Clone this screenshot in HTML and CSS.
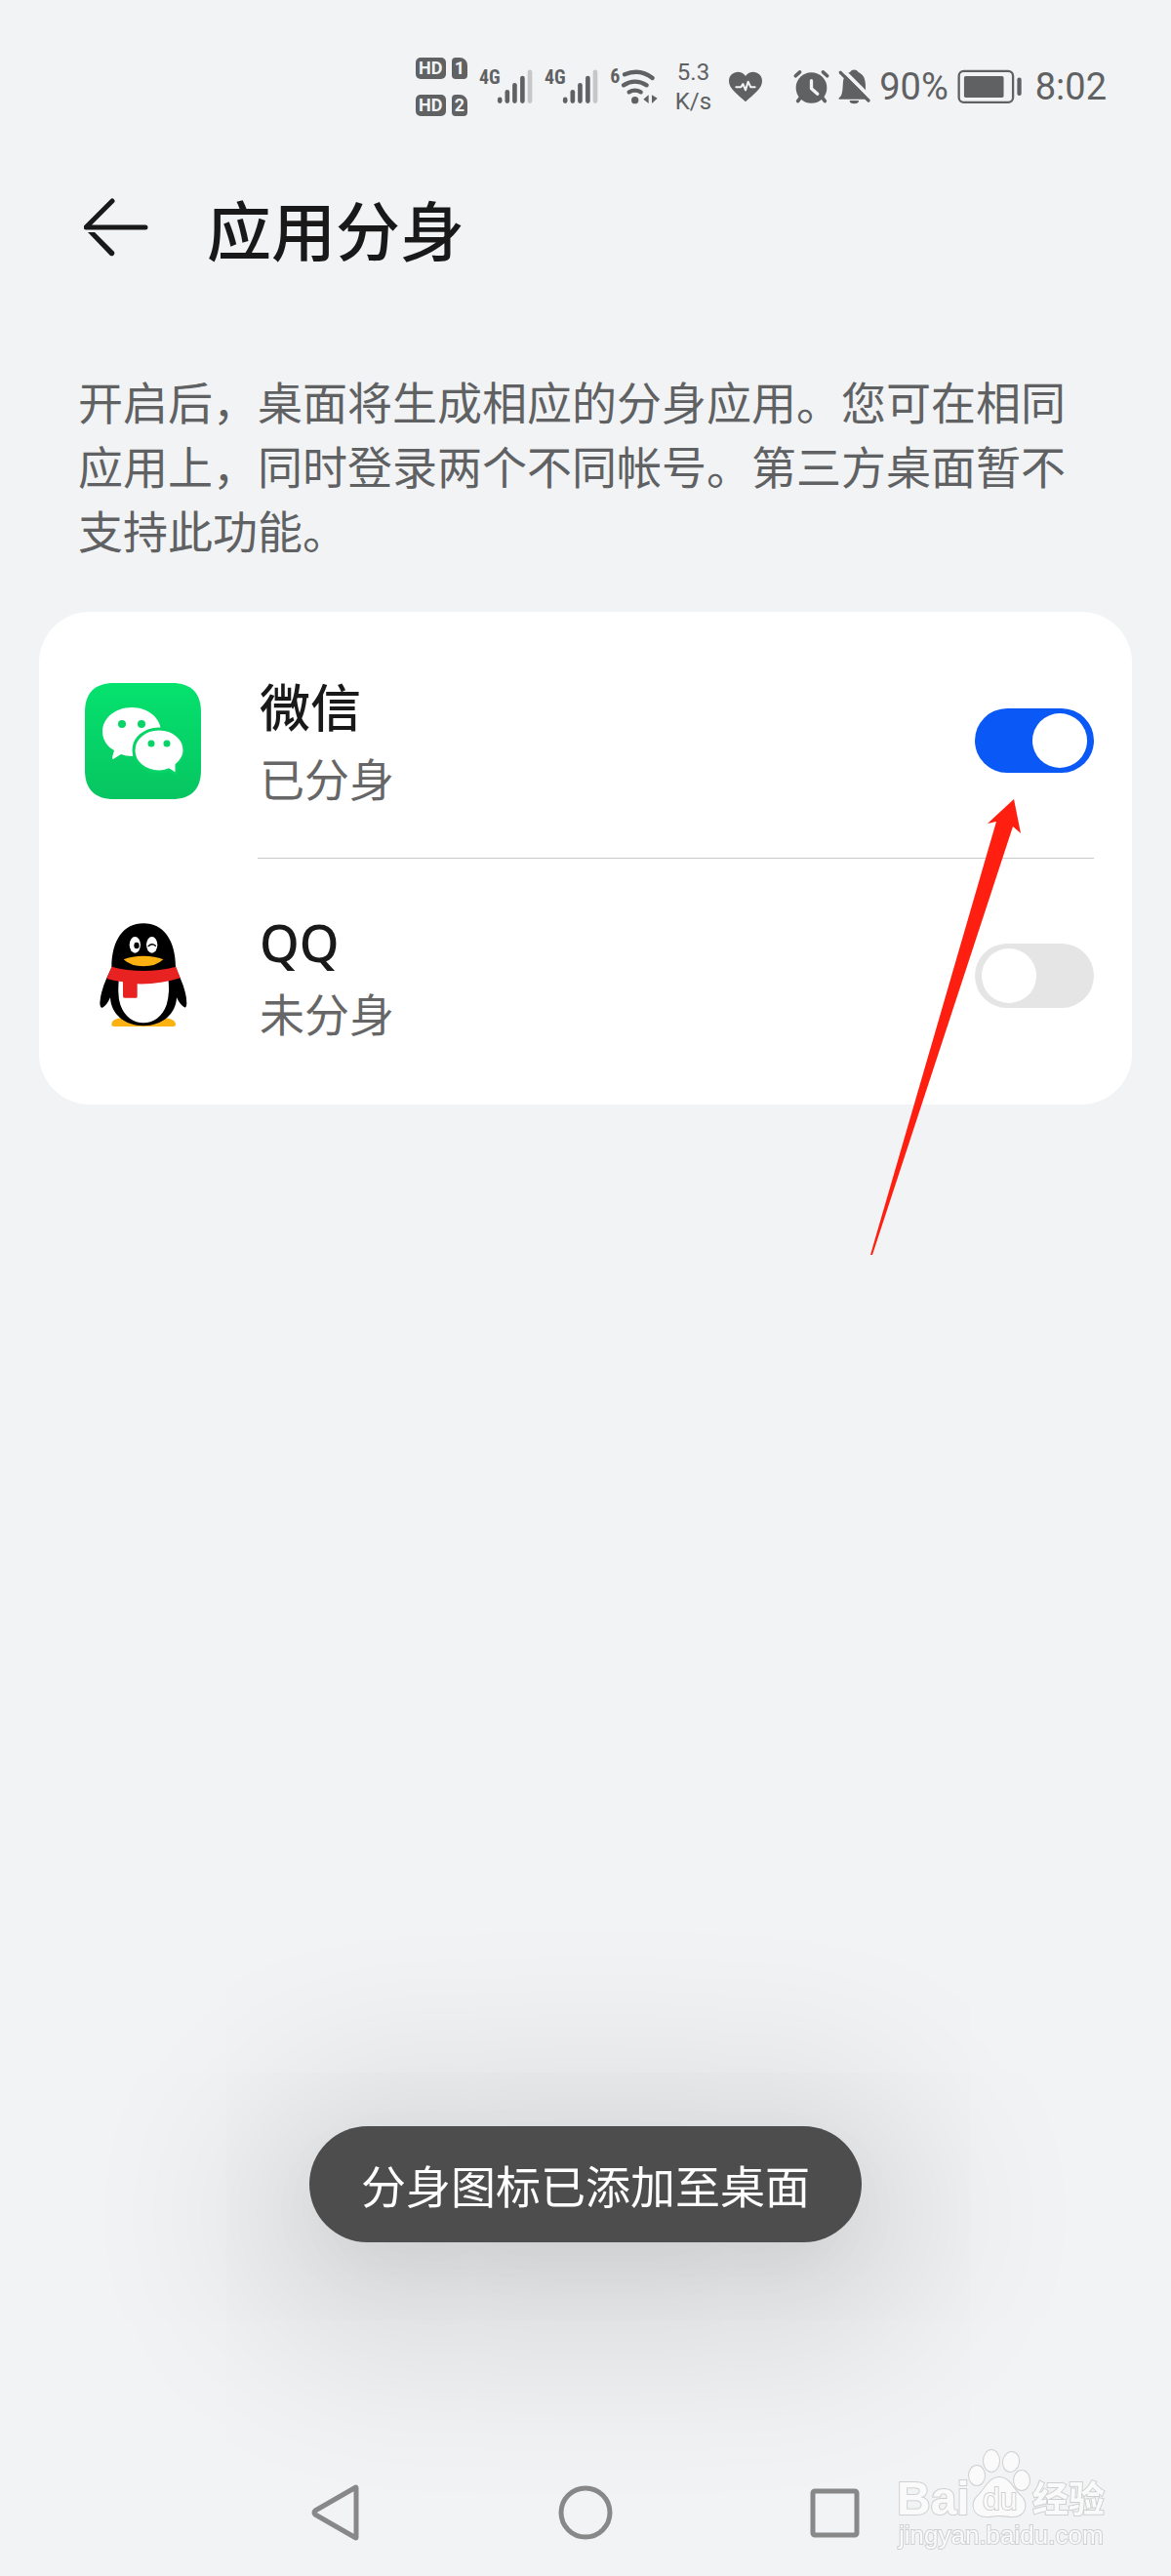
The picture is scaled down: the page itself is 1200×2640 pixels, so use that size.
FILE: index.html
```html
<!DOCTYPE html>
<html lang="zh-CN">
<head>
  <meta charset="UTF-8" />
  <meta name="viewport" content="width=device-width, initial-scale=1.0" />
  <title>应用分身</title>
  <link rel="stylesheet" href="styles.css">
</head>
<body>
  <div class="status-bar">
    <div class="network">
      <div class="hd-list">
        <span class="hd">HD</span><span class="sim">1</span>
        <span class="hd">HD</span><span class="sim">2</span>
      </div>
      <svg class="signal" viewBox="243 92 166 108">
        <text x="243" y="138">4G</text>
        <rect x="300" y="178" width="14" height="19" rx="7" />
        <rect x="323" y="155" width="14" height="42" rx="7" />
        <rect x="346" y="134" width="14" height="63" rx="7" />
        <rect x="370" y="112" width="14" height="85" rx="7" />
        <rect class="off" x="393" y="93" width="14" height="104" rx="7" />
      </svg>
      <svg class="signal" viewBox="243 92 166 108">
        <text x="243" y="138">4G</text>
        <rect x="300" y="178" width="14" height="19" rx="7" />
        <rect x="323" y="155" width="14" height="42" rx="7" />
        <rect x="346" y="134" width="14" height="63" rx="7" />
        <rect x="370" y="112" width="14" height="85" rx="7" />
        <rect class="off" x="393" y="93" width="14" height="104" rx="7" />
      </svg>
      <svg class="wifi" viewBox="638 92 150 108">
        <text x="639" y="135">6</text>
        <g fill="none" stroke="currentColor" stroke-width="13" stroke-linecap="round">
          <path d="M697 162Q715 152 733 162" />
          <path d="M680 141Q715 119 751 141" />
          <path d="M683 108Q730 88 769 119" />
        </g>
        <circle cx="715" cy="187" r="11" />
        <path d="M741 184l16-13v26zM767 171l17 10-17 16z" />
      </svg>
    </div>
    <div class="speed">5.3<br>K/s</div>
    <svg class="heart" viewBox="1010 98 108 98">
      <path d="M1064 193C1040 170 1013 153 1013 129C1013 102 1048 91 1064 114C1080 91 1115 102 1115 129C1115 153 1088 170 1064 193Z" />
      <path class="cut" stroke-width="6" d="M1035 148h15l6-10 8 19 8-26 8 17h13" />
    </svg>
    <div class="system">
      <svg class="alarm" viewBox="100 92 112 108">
        <circle cx="156" cy="149" r="48" />
        <path fill="none" stroke="currentColor" stroke-width="11" stroke-linecap="round" d="M107 112l13-12M192 100l13 12M122 180l-8 10M190 180l8 10" />
        <path class="cut" stroke-width="10" d="M156 127v24l19 17" />
      </svg>
      <svg class="bell" viewBox="245 92 99 108">
        <path d="M247 184v-4C260 172 258 150 260 130C262 114 270 105 281 101C287 91 301 91 307 101C322 108 330 120 329 150L331 184Z" />
        <path d="M280 188a14 10 0 0 0 28 0z" />
        <path class="cut" stroke-width="12" d="M259 94L350 185" />
        <path fill="none" stroke="currentColor" stroke-width="10" stroke-linecap="round" d="M252 102L338 188" />
      </svg>
      <span>90%</span>
      <svg class="battery" viewBox="603 92 203 108">
        <rect x="608" y="97" width="168" height="97" rx="15" fill="none" stroke="currentColor" stroke-width="7" />
        <rect x="624" y="113" width="123" height="66" rx="5" />
        <rect x="789" y="117" width="13" height="56" rx="6" />
      </svg>
      <span class="time">8:02</span>
    </div>
  </div>

  <header class="header">
    <button class="back" type="button" aria-label="返回">
      <svg viewBox="0 0 66 60">
        <path class="line" d="M29 3L2 30H63" />
        <path d="M4 35H11L31 55A3 3 0 0 1 27 59Z" />
      </svg>
    </button>
    <h1>应用分身</h1>
  </header>

  <main>
    <p class="intro">开启后，桌面将生成相应的分身应用。您可在相同应用上，同时登录两个不同帐号。第三方桌面暂不支持此功能。</p>

    <div class="card">
      <label class="app">
        <svg class="app-icon" viewBox="0 0 119 119">
          <defs>
            <linearGradient id="green" x1="0" y1="0" x2="0" y2="1">
              <stop offset="0" stop-color="#05e26e" />
              <stop offset="1" stop-color="#07c561" />
            </linearGradient>
          </defs>
          <path fill="url(#green)" d="M30 0H89C109 0 119 10 119 30V89C119 109 109 119 89 119H30C10 119 0 109 0 89V30C0 10 10 0 30 0Z" />
          <path fill="#fff" d="M48 25C65 25 78 36 78 50S65 75 48 75Q42 75 37 73L29 78Q28 78 28 76L30 69C22 65 18 57 18 50C18 36 31 25 48 25Z" />
          <path fill="#fff" stroke="#06d467" stroke-width="3" d="M76 47C91 47 102 57 102 69Q102 77 94 84L94 92Q93 93 91 92L86 89Q81 91 76 91C61 91 50 81 50 69S61 47 76 47Z" />
          <g fill="#06d467">
            <circle cx="38" cy="42" r="4" />
            <circle cx="58" cy="42" r="4" />
            <circle cx="68" cy="62" r="3.5" />
            <circle cx="84" cy="62" r="3.5" />
          </g>
        </svg>
        <span class="app-body">
          <span class="app-text">
            <span class="name">微信</span>
            <span class="state">已分身</span>
          </span>
          <input class="switch" type="checkbox" role="switch" checked>
        </span>
      </label>
      <label class="app">
        <svg class="app-icon" viewBox="21 30 357 357">
          <path fill="#fbb10f" d="M103 360C103 345 120 340 145 340H258C285 340 300 348 300 360Q300 366 288 366H115Q103 366 103 360Z" />
          <path d="M103 185C103 100 140 49 201 49S300 100 300 185L314 217Q334 262 334 295Q333 310 327 307Q314 300 303 277C301 328 258 364 201 364S101 328 99 277Q88 302 75 308Q68 310 67 295Q68 262 88 217Z" />
          <path fill="#fff" d="M126 215Q120 270 130 299C142 336 172 355 201 355S260 336 272 299Q283 265 277 215Z" />
          <path fill="#e82121" d="M103 182Q200 208 301 182L314 217Q250 237 182 235V275Q182 278 177 278H143Q138 278 138 273V229Q112 226 88 219Z" />
          <ellipse cx="175" cy="115" rx="17" ry="25" fill="#fff" />
          <ellipse cx="227" cy="115" rx="17" ry="25" fill="#fff" />
          <ellipse cx="180" cy="117" rx="8" ry="10" />
          <path fill="none" stroke="#000" stroke-width="4" stroke-linecap="round" d="M216 119Q227 108 238 118" />
          <path fill="#fbb10f" d="M140 160Q165 149 201 149T262 160Q240 181 201 181T140 160Z" />
        </svg>
        <span class="app-body">
          <span class="app-text">
            <span class="name">QQ</span>
            <span class="state">未分身</span>
          </span>
          <input class="switch" type="checkbox" role="switch">
        </span>
      </label>

      <!-- pointer to the first switch -->
      <svg class="pointer" viewBox="0 0 154 468">
        <path d="M147 0L154 35L146 28L2 467H0L129 23L120 25Z" />
      </svg>
    </div>
  </main>

  <div class="toast" role="status">分身图标已添加至桌面</div>

  <nav class="nav">
    <button type="button" aria-label="后退">
      <svg viewBox="0 0 60 60"><path d="M50 5Q50 3 48 5L8 28Q6 30 8 32L48 55Q50 57 50 55Z" /></svg>
    </button>
    <button type="button" aria-label="主页">
      <svg viewBox="0 0 60 60"><circle cx="30" cy="30" r="25" /></svg>
    </button>
    <button type="button" aria-label="最近任务">
      <svg viewBox="0 0 60 60"><rect x="8" y="8" width="45" height="45" rx="2" /></svg>
    </button>
  </nav>

  <svg class="watermark" viewBox="0 0 222 110">
    <text class="logo" x="3" y="71">Bai</text>
    <ellipse cx="85" cy="31" rx="8" ry="10" />
    <ellipse cx="100" cy="16" rx="8" ry="11" />
    <ellipse cx="120" cy="17" rx="8" ry="10" transform="rotate(12 120 17)" />
    <ellipse cx="131" cy="36" rx="8" ry="10" />
    <path d="M108 33C119 33 122 45 130 52C138 60 135 73 122 73C115 73 113 72 108 72S101 73 95 73C81 73 78 60 86 52C94 45 97 33 108 33Z" />
    <text class="du" x="91" y="66">du</text>
    <text class="cn" x="142" y="69">经验</text>
    <text class="url" x="5" y="101">jingyan.baidu.com</text>
  </svg>
</body>
</html>
```
FILE: styles.css
```css
* {
  box-sizing: border-box;
}
body {
  display: flex;
  flex-direction: column;
  position: relative;
  min-height: 100vh;
  margin: 0;
  background: #f1f3f5;
  color: #191919;
  font-family: "Noto Sans CJK SC", sans-serif;
}
button {
  padding: 0;
  border: 0;
  background: none;
}
svg {
  display: block;
  flex: none;
}

/* status bar */
.status-bar {
  display: flex;
  justify-content: flex-end;
  align-items: center;
  gap: 17px;
  height: 122px;
  padding: 56px 66px 0;
  color: #5f6163;
  font-family: Roboto, sans-serif;
}
.status-bar svg {
  height: 36px;
  overflow: visible;
  fill: currentColor;
}
.status-bar .cut {
  fill: none;
  stroke: #f1f3f5;
  stroke-linecap: round;
  stroke-linejoin: round;
}
.status-bar text {
  font: bold 60px "Roboto Condensed", "Liberation Sans Narrow", Roboto, sans-serif;
}
.network {
  display: flex;
  align-items: center;
  gap: 12px;
}
.hd-list {
  display: grid;
  grid-template-columns: 31px 16px;
  gap: 16px 6px;
}
.hd,
.sim {
  border-radius: 5px;
  background: #5f6163;
  color: #f1f3f5;
  font-size: 18px;
  font-weight: bold;
  line-height: 22px;
  text-align: center;
}
.sim {
  border-radius: 4px 8px 4px 4px;
}
.signal {
  width: 55px;
}
.signal .off {
  fill: #c5c7c9;
}
.wifi {
  width: 50px;
}
.speed {
  font-size: 24px;
  line-height: 30px;
  text-align: center;
}
.heart {
  width: 36px;
}
.system {
  display: flex;
  align-items: center;
  gap: 9px;
  margin-left: 14px;
  font-size: 38px;
}
.alarm {
  width: 37px;
}
.bell {
  width: 33px;
}
.battery {
  width: 67px;
}
.time {
  margin-left: 4px;
}

/* title */
.header {
  display: flex;
  align-items: center;
  gap: 60px;
  padding: 71px 86px 0;
}
.back svg {
  width: 66px;
  height: 60px;
  fill: #191919;
}
.back .line {
  fill: none;
  stroke: #191919;
  stroke-width: 5;
  stroke-linecap: round;
  stroke-linejoin: round;
}
h1 {
  margin: 0;
  font-size: 66px;
  font-weight: 500;
  line-height: 80px;
}

.intro {
  margin: 104px 80px 52px;
  color: #5f6163;
  font-size: 46px;
  line-height: 66px;
}

/* app list */
.card {
  position: relative;
  margin: 0 40px;
  padding: 12px 0 13px;
  border-radius: 52px;
  background: #fff;
}
.app {
  display: flex;
  align-items: center;
  gap: 58px;
  padding: 0 39px 0 47px;
}
.app-icon {
  width: 119px;
  height: 119px;
}
.app-body {
  display: flex;
  flex: 1;
  align-items: center;
  justify-content: space-between;
  height: 240px;
}
.app + .app .app-body {
  border-top: 1px solid #c8c8c8;
}
.app-text {
  display: flex;
  flex-direction: column;
  gap: 2px;
  padding-left: 2px;
}
.name {
  font-family: "Noto Sans", "Noto Sans CJK SC", sans-serif;
  font-size: 52px;
  font-weight: 500;
  line-height: 72px;
}
.state {
  color: #666;
  font-size: 46px;
  line-height: 66px;
}
.switch {
  appearance: none;
  width: 122px;
  height: 66px;
  margin: 0;
  padding: 5px 7px;
  border-radius: 33px;
  background: #e5e5e5;
}
.switch::before {
  content: "";
  display: block;
  width: 56px;
  height: 56px;
  border-radius: 50%;
  background: #fff;
}
.switch:checked {
  background: #0a59f7;
}
.switch:checked::before {
  margin-left: auto;
}
.pointer {
  position: absolute;
  top: 192px;
  right: 114px;
  width: 154px;
  height: 468px;
  fill: #ff1f10;
  pointer-events: none;
}

.toast {
  position: fixed;
  right: 0;
  bottom: 342px;
  left: 0;
  width: fit-content;
  margin: 0 auto;
  padding: 26px 53px 27px;
  border-radius: 60px;
  background: #4d4d4d;
  box-shadow: 0 24px 80px rgba(0, 0, 0, 0.05), 0 30px 180px 70px rgba(0, 0, 0, 0.12);
  color: #fff;
  font-size: 46px;
  line-height: 66px;
  white-space: nowrap;
}

/* system navigation */
.nav {
  display: flex;
  justify-content: center;
  align-items: center;
  gap: 195px;
  height: 130px;
  margin-top: auto;
}
.nav svg {
  width: 60px;
  height: 60px;
  fill: none;
  stroke: #888;
  stroke-width: 5;
  stroke-linejoin: round;
}

.watermark {
  position: absolute;
  right: 62px;
  bottom: 24px;
  width: 222px;
  height: 110px;
  overflow: visible;
  fill: #fafafa;
  stroke: #cfd0d1;
  stroke-width: 2;
  paint-order: stroke;
}
.logo {
  font: bold 48px "Liberation Sans", sans-serif;
}
.du {
  font: 32px "Liberation Sans", sans-serif;
}
.cn {
  font: bold 37px "Noto Sans CJK SC", sans-serif;
}
.url {
  font: 26px "Liberation Sans", sans-serif;
}
```
